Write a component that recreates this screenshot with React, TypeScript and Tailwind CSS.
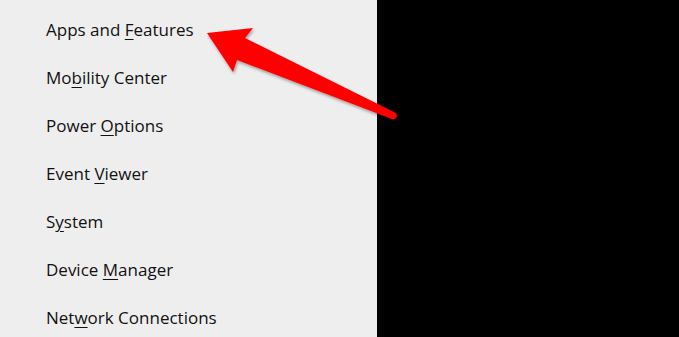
import React from "react";

const items: [string, string, string][] = [
  ["Apps and ", "F", "eatures"],
  ["Mo", "b", "ility Center"],
  ["Power ", "O", "ptions"],
  ["Event ", "V", "iewer"],
  ["S", "y", "stem"],
  ["Device ", "M", "anager"],
  ["Net", "w", "ork Connections"],
];

export default function App() {
  return (
    <div className="relative w-[679px] h-[337px] overflow-hidden bg-black flex">
      <div className="w-[377px] h-full bg-[#eeeeee] flex flex-col pt-[5px] pl-[46px]">
        {items.map(([a, u, b], i) => (
          <div
            key={i}
            className="h-[48px] shrink-0 flex items-center text-[17px] text-[#111] leading-none"
            style={{ fontFamily: '"Open Sans", "Noto Sans", sans-serif' }}
          >
            <span>
              {a}
              <span className="underline underline-offset-[3px] decoration-[1px]">{u}</span>
              {b}
            </span>
          </div>
        ))}
      </div>
      <svg className="absolute left-0 top-0" width="679" height="337" viewBox="0 0 679 337">
        <defs>
          <filter id="sh" x="-20%" y="-20%" width="140%" height="140%">
            <feDropShadow dx="1" dy="2" stdDeviation="1.5" floodColor="#000" floodOpacity="0.35" />
          </filter>
        </defs>
        <path
          d="M207 33 L253 28 L245 38 L395 112.5 Q398.5 115.5 395.5 118.5 Q394 119.5 392 119 L237 60 L233 72 Z"
          fill="#ff0000"
          filter="url(#sh)"
        />
      </svg>
    </div>
  );
}
